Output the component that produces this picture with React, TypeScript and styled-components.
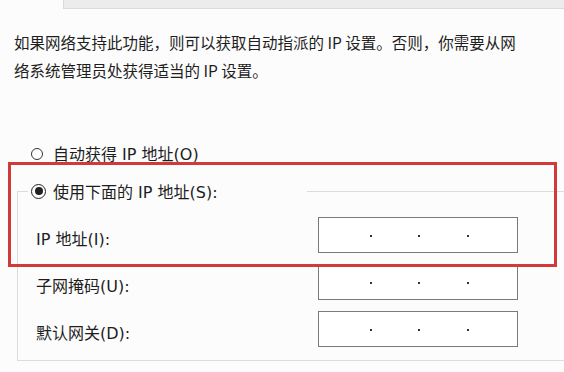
import React from 'react';
import styled, { createGlobalStyle } from 'styled-components';

const GlobalStyle = createGlobalStyle`
  html, body {
    margin: 0;
    padding: 0;
    background: #fcfcfc;
  }
  body {
    font-family: 'Noto Sans CJK SC', 'Noto Sans', sans-serif;
    color: #1e1e1e;
  }
`;

const labelFont = `'DejaVu Sans', 'Noto Sans CJK SC', sans-serif`;

const Page = styled.div`
  position: relative;
  width: 564px;
  height: 372px;
  overflow: hidden;
  background: #fcfcfc;
`;

const TopBar = styled.div`
  margin-left: 63px;
  margin-right: -4px;
  height: 8px;
  background: #ececec;
  border: 1px solid #dadada;
  border-top: none;
`;

const Description = styled.p`
  margin: 19px 0 0;
  padding-left: 14px;
  width: 502px;
  font-size: 15.5px;
  line-height: 28px;
`;

const RadioRow = styled.label`
  display: flex;
  align-items: center;
  gap: 10px;
  height: 20px;
  margin-top: 59px;
  padding-left: 31px;
  font-family: ${labelFont};
  font-size: 16px;
`;

const RadioCircle = styled.span<{ checked?: boolean }>`
  box-sizing: border-box;
  position: relative;
  flex: none;
  width: ${({ checked }) => (checked ? 15 : 12)}px;
  height: ${({ checked }) => (checked ? 15 : 12)}px;
  border-radius: 50%;
  border: ${({ checked }) => (checked ? '1.5px solid #222' : '1px solid #333')};
  background: #fff;
  margin-top: ${({ checked }) => (checked ? 0 : 2)}px;

  &::after {
    content: '';
    display: ${({ checked }) => (checked ? 'block' : 'none')};
    position: absolute;
    left: 50%;
    top: 50%;
    width: 8px;
    height: 8px;
    border-radius: 50%;
    background: #222;
    transform: translate(-50%, -50%);
  }
`;

const GroupBox = styled.fieldset`
  margin: 18px -20px 0 17px;
  padding: 0 10px 13px;
  border: 1px solid #dcdcdc;
  min-width: 0;
`;

const Legend = styled.legend`
  display: flex;
  align-items: center;
  gap: 7px;
  box-sizing: border-box;
  width: 279px;
  height: 20px;
  padding: 0 0 0 3px;
  font-family: ${labelFont};
  font-size: 16px;
`;

const Fields = styled.div`
  display: flex;
  flex-direction: column;
  gap: 11px;
  padding-top: 16px;
`;

const FieldRow = styled.div`
  display: flex;
  align-items: center;
  padding-left: 8px;
`;

const FieldLabel = styled.span`
  width: 282px;
  padding-top: 5px;
  font-family: ${labelFont};
  font-size: 16px;
`;

const AddressBox = styled.div`
  box-sizing: border-box;
  display: grid;
  grid-template-columns: 48px 4px 44px 4px 45px 4px 1fr;
  align-items: center;
  width: 200px;
  height: 36px;
  padding-left: 2px;
  background: #fff;
  border: 1px solid #7a7a7a;
`;

const Octet = styled.span``;

const Dot = styled.span`
  display: flex;
  justify-content: center;
  padding-top: 2px;

  &::before {
    content: '';
    width: 2px;
    height: 2px;
    background: #333;
  }
`;

const Highlight = styled.div`
  position: absolute;
  left: 8px;
  top: 162px;
  width: 549px;
  height: 105px;
  box-sizing: border-box;
  border: 3.5px solid #d23a3a;
  pointer-events: none;
`;

const IpInput = () => (
  <AddressBox>
    <Octet />
    <Dot />
    <Octet />
    <Dot />
    <Octet />
    <Dot />
    <Octet />
  </AddressBox>
);

const fields = ['IP 地址(I):', '子网掩码(U):', '默认网关(D):'];

export default function App() {
  return (
    <>
      <GlobalStyle />
      <Page>
        <TopBar />
        <Description>
          如果网络支持此功能，则可以获取自动指派的 IP 设置。否则，你需要从网络系统管理员处获得适当的 IP 设置。
        </Description>
        <RadioRow>
          <RadioCircle />
          自动获得 IP 地址(O)
        </RadioRow>
        <GroupBox>
          <Legend>
            <RadioCircle checked />
            使用下面的 IP 地址(S):
          </Legend>
          <Fields>
            {fields.map((label) => (
              <FieldRow key={label}>
                <FieldLabel>{label}</FieldLabel>
                <IpInput />
              </FieldRow>
            ))}
          </Fields>
        </GroupBox>
        <Highlight />
      </Page>
    </>
  );
}
